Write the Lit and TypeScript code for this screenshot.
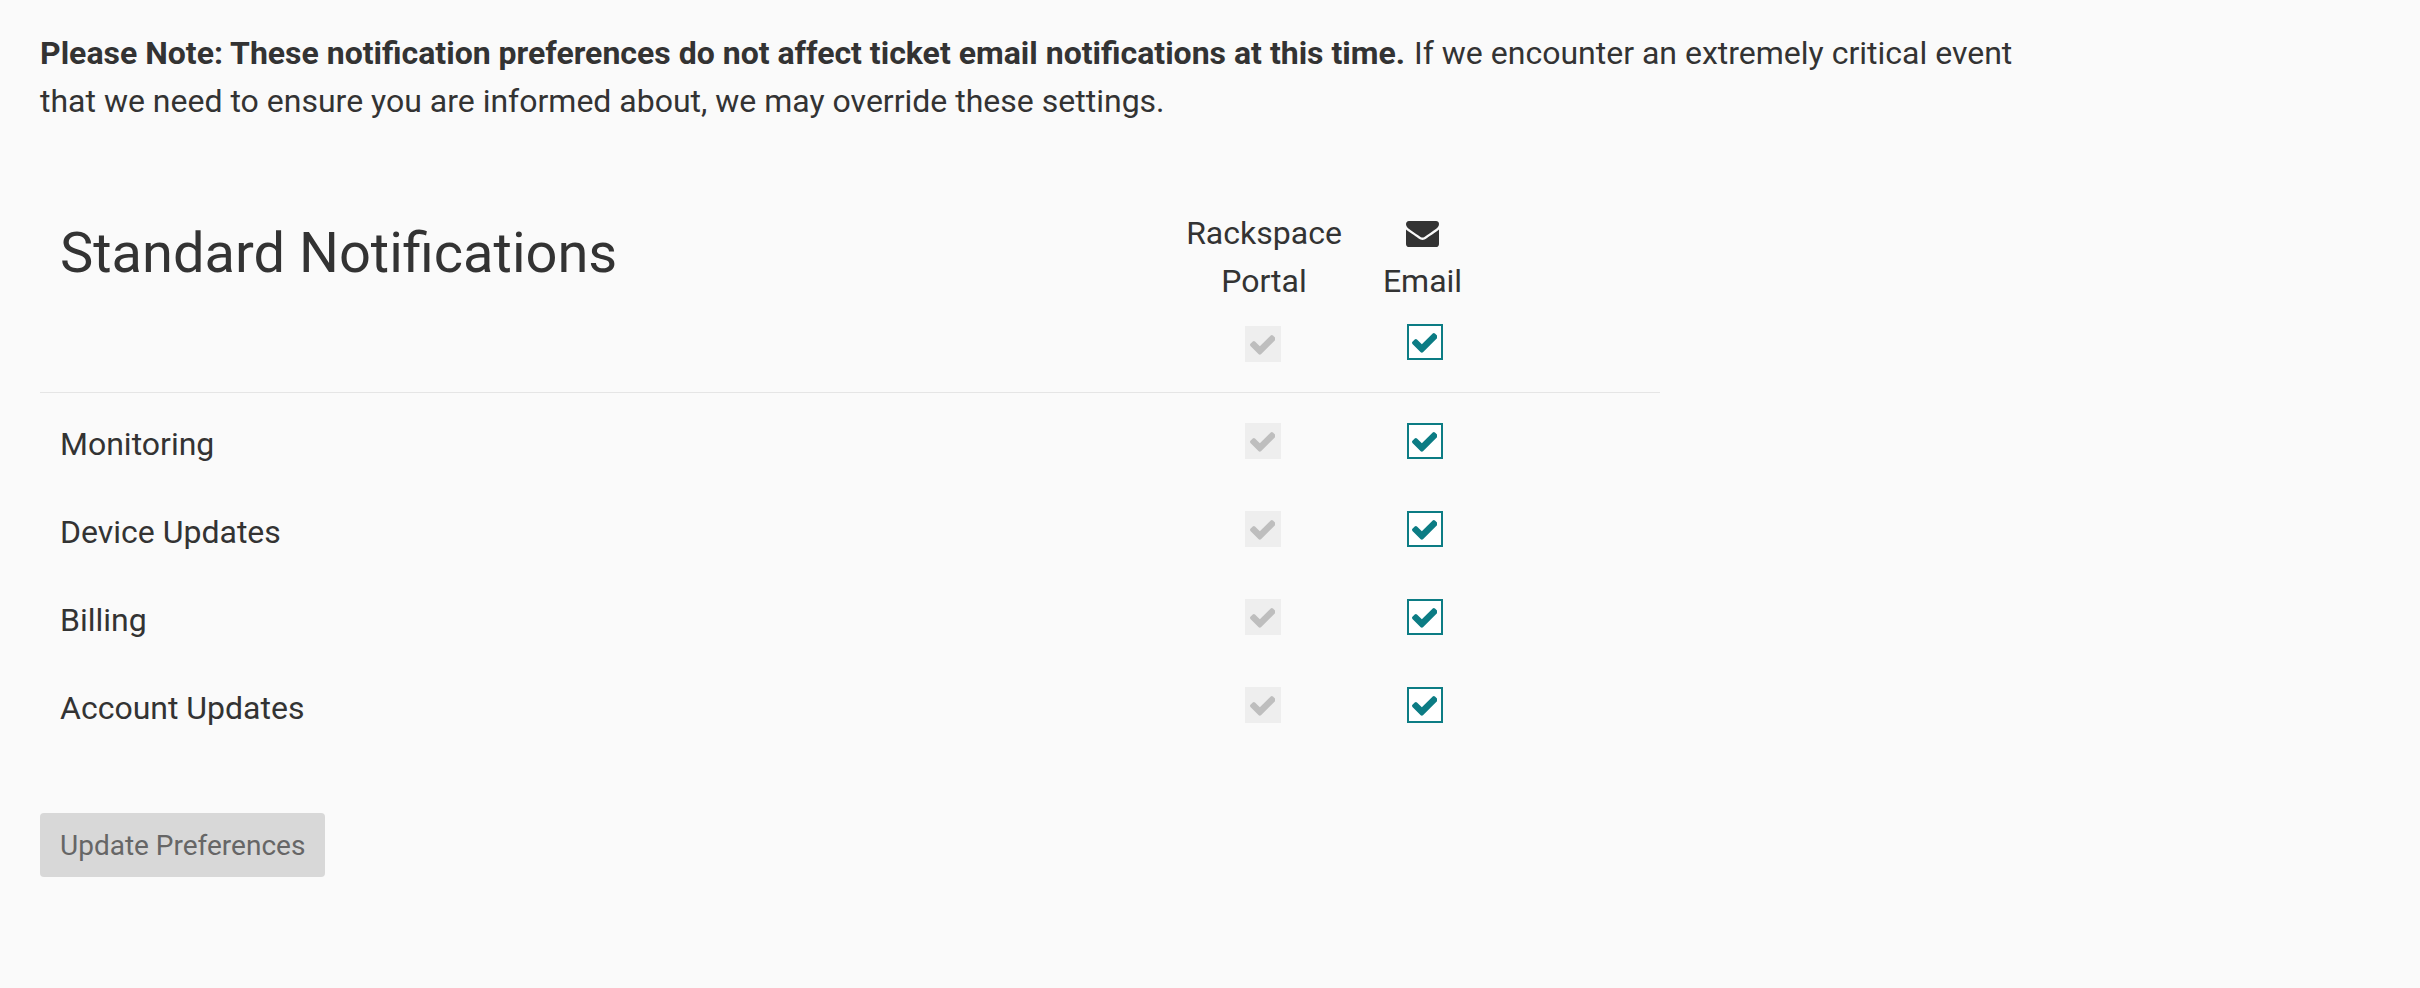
import { LitElement, html, css, svg } from "lit";
import { customElement, property } from "lit/decorators.js";
import { classMap } from "lit/directives/class-map.js";

@customElement("check-box")
class CheckBox extends LitElement {
  @property({ type: Boolean }) disabled = false;

  static styles = css`
    :host { display: block; }
    .box {
      box-sizing: border-box;
      width: 36px;
      height: 36px;
      border: 2px solid #0c7c84;
      background: #fff;
      color: #0c7c84;
      padding: 7px 0 0 2.7px;
    }
    .box.off { border-color: #eee; background: #eee; color: #bebebe; }
    svg { display: block; width: 25.7px; height: 19.7px; fill: currentColor; }
  `;

  render() {
    return html`<div class=${classMap({ box: true, off: this.disabled })} role="checkbox" aria-checked="true">
      <svg viewBox="121 334 1550 1188" preserveAspectRatio="none">
        <path d="M1671 566q0 40-28 68l-724 724-136 136q-28 28-68 28t-68-28l-136-136-362-362q-28-28-28-68t28-68l136-136q28-28 68-28t68 28l294 295 656-657q28-28 68-28t68 28l136 136q28 28 28 68z" />
      </svg>
    </div>`;
  }
}

const envelope = svg`<path d="M1792 710v794q0 66-47 113t-113 47h-1472q-66 0-113-47t-47-113v-794q44 49 101 87 362 246 497 345 57 42 92.5 65.5t94.5 48 110 24.5h2q51 0 110-24.5t94.5-48 92.5-65.5q170-123 498-345 57-39 100-87zm0-294q0 79-49 151t-122 123q-376 261-468 325-10 7-42.5 31t-54 38.5-52 32.5-57.5 27-50 9h-2q-23 0-50-9t-57.5-27-52-32.5-54-38.5-42.5-31q-91-64-262-182.5t-205-142.5q-62-42-117-115.5t-55-136.5q0-78 41.5-130t118.5-52h1472q65 0 112.5 47t47.5 113z"/>`;

@customElement("app-root")
class AppRoot extends LitElement {
  static styles = css`
    :host {
      display: block;
      box-sizing: border-box;
      min-height: 988px;
      padding: 29px 40px 0;
      background: #fafafa;
      color: #333;
      font: 32px/48px Roboto, sans-serif;
    }
    .note { margin: 0; width: 2000px; }
    .note b { margin-right: 1px; }
    .table { width: 1620px; margin-top: 84px; }
    .head, .row {
      display: grid;
      grid-template-columns: 1144px 160px 157px;
    }
    .head { height: 183px; border-bottom: 1px solid #e5e5e5; }
    .title { margin: 0; padding: 13px 0 0 20px; font-size: 56px; line-height: 62px; font-weight: 400; }
    .col { text-align: center; }
    .col span { display: block; }
    .icon { display: flex; box-sizing: border-box; height: 48px; padding-top: 2px; justify-content: center; align-items: center; }
    .icon svg { width: 33px; height: 26px; fill: #333; }
    .portal { margin: 21px 0 0 61px; }
    .email { margin: 19px 0 0 63px; }
    .rows { padding-top: 7px; }
    .row { height: 88px; }
    .label { padding: 20px 0 0 20px; }
    .row .portal, .row .email { margin-top: 23px; }
    .save {
      display: block;
      height: 64px;
      margin-top: 61px;
      padding: 1px 20px 0;
      border: 0;
      border-radius: 4px;
      background: #d8d8d8;
      color: #666;
      font: 28px/63px Roboto, sans-serif;
    }
  `;

  private topics = ["Monitoring", "Device Updates", "Billing", "Account Updates"];

  render() {
    return html`
      <p class="note"><b>Please Note: These notification preferences do not affect ticket email notifications at this time.</b> If we encounter an extremely critical event that we need to ensure you are informed about, we may override these settings.</p>
      <div class="table">
        <div class="head">
          <h2 class="title">Standard Notifications</h2>
          <div class="col"><span>Rackspace</span><span>Portal</span><check-box class="portal" disabled></check-box></div>
          <div class="col">
            <div class="icon"><svg viewBox="0 256 1792 1408" preserveAspectRatio="none">${envelope}</svg></div>
            <span>Email</span><check-box class="email"></check-box>
          </div>
        </div>
        <div class="rows">
          ${this.topics.map((topic) => html`<div class="row">
            <div class="label">${topic}</div>
            <check-box class="portal" disabled></check-box>
            <check-box class="email"></check-box>
          </div>`)}
        </div>
      </div>
      <button class="save">Update Preferences</button>
    `;
  }
}
